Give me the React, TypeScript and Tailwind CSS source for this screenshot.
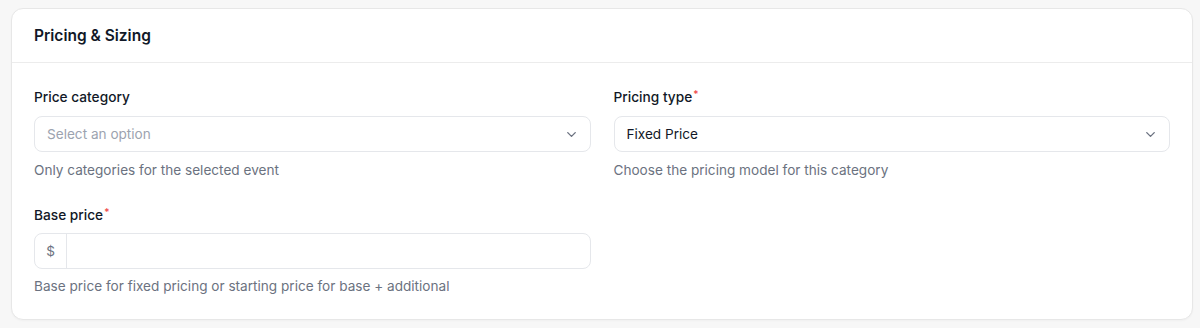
import React from "react";

function Chevron() {
  return (
    <svg width="15" height="15" viewBox="0 0 24 24" fill="none" stroke="#6b7280" strokeWidth="2.2" strokeLinecap="round" strokeLinejoin="round">
      <path d="m6 9 6 6 6-6" />
    </svg>
  );
}

function Label({ text, required }: { text: string; required?: boolean }) {
  return (
    <div className="text-[13.7px] leading-[20px] font-medium text-[#111827]">
      {text}
      {required && <span className="text-[10px] text-[#ef4444] align-top relative top-[-3px] ml-[1px]">*</span>}
    </div>
  );
}

export default function App() {
  return (
    <div className="w-[1200px] h-[328px] bg-[#f7f7f7] pt-[8px] pl-[11px]" style={{ fontFamily: "Inter, 'Noto Sans', sans-serif" }}>
      <div className="w-[1182px] h-[312px] bg-white border border-[#e7e7e7] rounded-[12px] shadow-[0_1px_2px_rgba(0,0,0,0.03)]">
        <div className="h-[54px] flex items-center px-[22px] border-b border-[#ececec]">
          <h2 className="text-[15.5px] leading-[20px] font-semibold text-[#111827]">Pricing &amp; Sizing</h2>
        </div>
        <div className="px-[22px] pt-[24px] grid grid-cols-2 gap-x-[23px]">
          <div>
            <Label text="Price category" />
            <div className="mt-[9px] h-[36px] border border-[#e5e7eb] rounded-[8px] flex items-center justify-between pl-[12px] pr-[11px]">
              <span className="text-[13.6px] text-[#9ca3af]">Select an option</span>
              <Chevron />
            </div>
            <div className="mt-[8px] text-[13.6px] leading-[20px] text-[#6b7280]">Only categories for the selected event</div>
          </div>
          <div>
            <Label text="Pricing type" required />
            <div className="mt-[9px] h-[36px] border border-[#e5e7eb] rounded-[8px] flex items-center justify-between pl-[12px] pr-[11px]">
              <span className="text-[13.6px] text-[#111827]">Fixed Price</span>
              <Chevron />
            </div>
            <div className="mt-[8px] text-[13.6px] leading-[20px] text-[#6b7280]">Choose the pricing model for this category</div>
          </div>
          <div className="mt-[25px]">
            <Label text="Base price" required />
            <div className="mt-[8px] h-[36px] border border-[#e5e7eb] rounded-[8px] flex items-stretch">
              <div className="w-[32px] border-r border-[#e5e7eb] flex items-center justify-center text-[13.6px] text-[#6b7280]">$</div>
              <div className="flex-1" />
            </div>
            <div className="mt-[7px] text-[13.6px] leading-[20px] text-[#6b7280]">Base price for fixed pricing or starting price for base + additional</div>
          </div>
        </div>
      </div>
    </div>
  );
}
